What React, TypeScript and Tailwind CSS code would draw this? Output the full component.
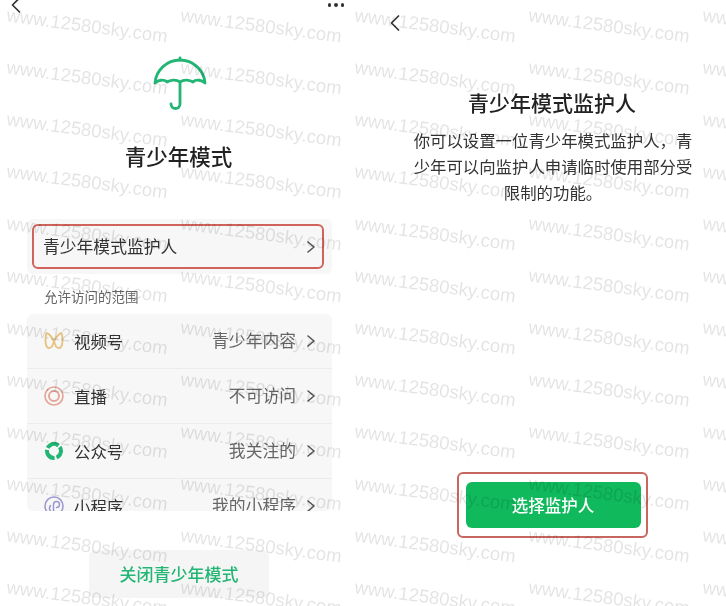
const FONT = "font-['Noto_Sans_CJK_SC','Noto_Sans',sans-serif]"

const ROWS = [
  { label: '视频号', value: '青少年内容', icon: 'channels' },
  { label: '直播', value: '不可访问', icon: 'live' },
  { label: '公众号', value: '我关注的', icon: 'official' },
  { label: '小程序', value: '我的小程序', icon: 'mini' },
]

function Chevron({ className = '' }: { className?: string }) {
  return (
    <svg viewBox="0 0 8 12" fill="none" className={`h-[12px] w-[8px] shrink-0 ${className}`}>
      <path d="M1 1l6 5-6 5" stroke="#555" strokeWidth="1.6" strokeLinecap="round" strokeLinejoin="round" />
    </svg>
  )
}

function BackArrow() {
  return (
    <svg viewBox="0 0 10 16" fill="none" className="h-[16px] w-[10px]">
      <path d="M8.500 1 1.500 8l7 7" stroke="#333" strokeWidth="1.7" strokeLinecap="round" strokeLinejoin="round" />
    </svg>
  )
}

function Umbrella() {
  return (
    <svg viewBox="0 0 54 54" fill="none" className="h-[54px] w-[54px]" stroke="#22b573" strokeWidth="2.800" strokeLinecap="round" strokeLinejoin="round">
      <path d="M27 2v2" />
      <path d="M2 27C3 14 14 4 27 4s24 10 25 23c-3-3-9-4-12-1-3-2-9-3-13 0-4-3-10-2-13 0-3-3-9-2-12 1Z" />
      <path d="M27 26v22c0 6-9 6-9 0" />
    </svg>
  )
}

function RowIcon({ name }: { name: string }) {
  if (name === 'channels') {
    return (
      <svg viewBox="0 0 20 20" fill="none" className="h-5 w-5" stroke="#e8c483" strokeWidth="1.900" strokeLinejoin="round">
        <path d="M2.500 2C6 3 9 8 11 13c1 4 4 5 6 3 2-3 2-10 .5-14C14 3 11 8 9 13c-1 4-4 5-6 3-2-3-2-10-.5-14Z" />
      </svg>
    )
  }
  if (name === 'live') {
    return (
      <svg viewBox="0 0 20 20" fill="none" className="h-5 w-5" stroke="#e5a69a">
        <circle cx="10" cy="10" r="9" strokeWidth="1.700" />
        <circle cx="10" cy="10" r="5" strokeWidth="2" />
      </svg>
    )
  }
  if (name === 'official') {
    return (
      <svg viewBox="0 0 20 20" fill="none" className="h-5 w-5" stroke="#22b573" strokeWidth="4">
        <circle cx="10" cy="10" r="7" strokeDasharray="12.600 2" transform="rotate(-35 10 10)" />
      </svg>
    )
  }
  return (
    <svg viewBox="0 0 20 20" fill="none" className="h-5 w-5" stroke="#9a98cf" strokeWidth="1.500" strokeLinecap="round">
      <circle cx="10" cy="10" r="9" />
      <path d="M6.500 15c-1.500-2-1.500-3.500 0-5.500" />
      <path d="M9.500 15V8.500a3 3 0 1 1 3 3" />
    </svg>
  )
}

function Watermarks() {
  return (
    <div className="pointer-events-none absolute inset-0 grid grid-cols-[repeat(5,174px)] auto-rows-[52px] overflow-hidden">
      {Array.from({ length: 60 }, (_, i) => (
        <div key={i} className="flex items-center justify-center">
          <span className="rotate-[7.5deg] whitespace-nowrap font-['Liberation_Sans',sans-serif] text-[18.5px] leading-none text-black/[0.11]">
            www.12580sky.com
          </span>
        </div>
      ))}
    </div>
  )
}

export default function App() {
  return (
    <div className={`relative flex h-[606px] w-[726px] overflow-hidden bg-white blur-[0.5px] ${FONT}`}>
      {/* left phone */}
      <div className="flex w-[363px] flex-col">
        <div className="flex h-[14px] items-start justify-between pl-[11px] pr-[19px]">
          <div className="-mt-[3px]"><BackArrow /></div>
          <div className="mt-[3px] flex gap-[3px]">
            <span className="h-[3.5px] w-[3.5px] rounded-full bg-[#333]" />
            <span className="h-[3.5px] w-[3.5px] rounded-full bg-[#333]" />
            <span className="h-[3.5px] w-[3.5px] rounded-full bg-[#333]" />
          </div>
        </div>

        <div className="mt-[42px] flex justify-center pr-[4px]"><Umbrella /></div>
        <h1 className="mt-[30px] pr-[6px] text-center text-[21.5px] font-medium leading-[32px] text-[#222]">青少年模式</h1>

        <div className="ml-[27px] mt-[47px] w-[305px] rounded-md bg-[#f7f7f7] py-[5px] pl-[5px] pr-[8px]">
          <div className="flex h-[45px] items-center justify-between rounded-md border-2 border-[#d0635c] pl-[9px] pr-[7px]">
            <span className="text-[16.8px] text-[#333]">青少年模式监护人</span>
            <Chevron />
          </div>
        </div>

        <p className="ml-[44px] mt-[12px] text-[13.5px] leading-[20px] text-[#666]">允许访问的范围</p>

        <div className="ml-[27px] mt-[8px] h-[197px] w-[305px] overflow-hidden rounded-md bg-[#f7f7f7]">
          {ROWS.map((row) => (
            <div key={row.label} className="flex h-[55px] items-center border-b border-[#ececec] pl-[17px] pr-[17px]">
              <RowIcon name={row.icon} />
              <span className="ml-[10px] text-[16.4px] text-[#333]">{row.label}</span>
              <span className="ml-auto text-[16.8px] text-[#666]">{row.value}</span>
              <Chevron className="ml-[11px]" />
            </div>
          ))}
        </div>

        <div className="ml-[89px] mt-[39px] flex h-[48px] w-[180px] items-center justify-center rounded-md bg-[#f5f5f5] text-[17px] font-medium text-[#22b573]">
          关闭青少年模式
        </div>
      </div>

      {/* right phone */}
      <div className="flex w-[363px] flex-col">
        <div className="ml-[27px] mt-[15px] flex h-[16px]"><BackArrow /></div>
        <h2 className="mt-[56px] pl-[15px] text-center text-[21px] font-medium leading-[30px] text-[#222]">青少年模式监护人</h2>
        <p className="ml-[50px] mt-[10px] w-[280px] text-center text-[16.4px] leading-[26px] text-[#333]">
          你可以设置一位青少年模式监护人，青少年可以向监护人申请临时使用部分受限制的功能。
        </p>

        <div className="ml-[94px] mt-auto mb-[68px] flex h-[66px] w-[191px] items-center justify-center rounded-md border-2 border-[#c9665f] pl-[1px]">
          <div className="flex h-[46px] w-[175px] items-center justify-center rounded-md bg-[#10b95c] text-[16.5px] font-medium text-white">
            选择监护人
          </div>
        </div>
      </div>

      <Watermarks />
    </div>
  )
}
